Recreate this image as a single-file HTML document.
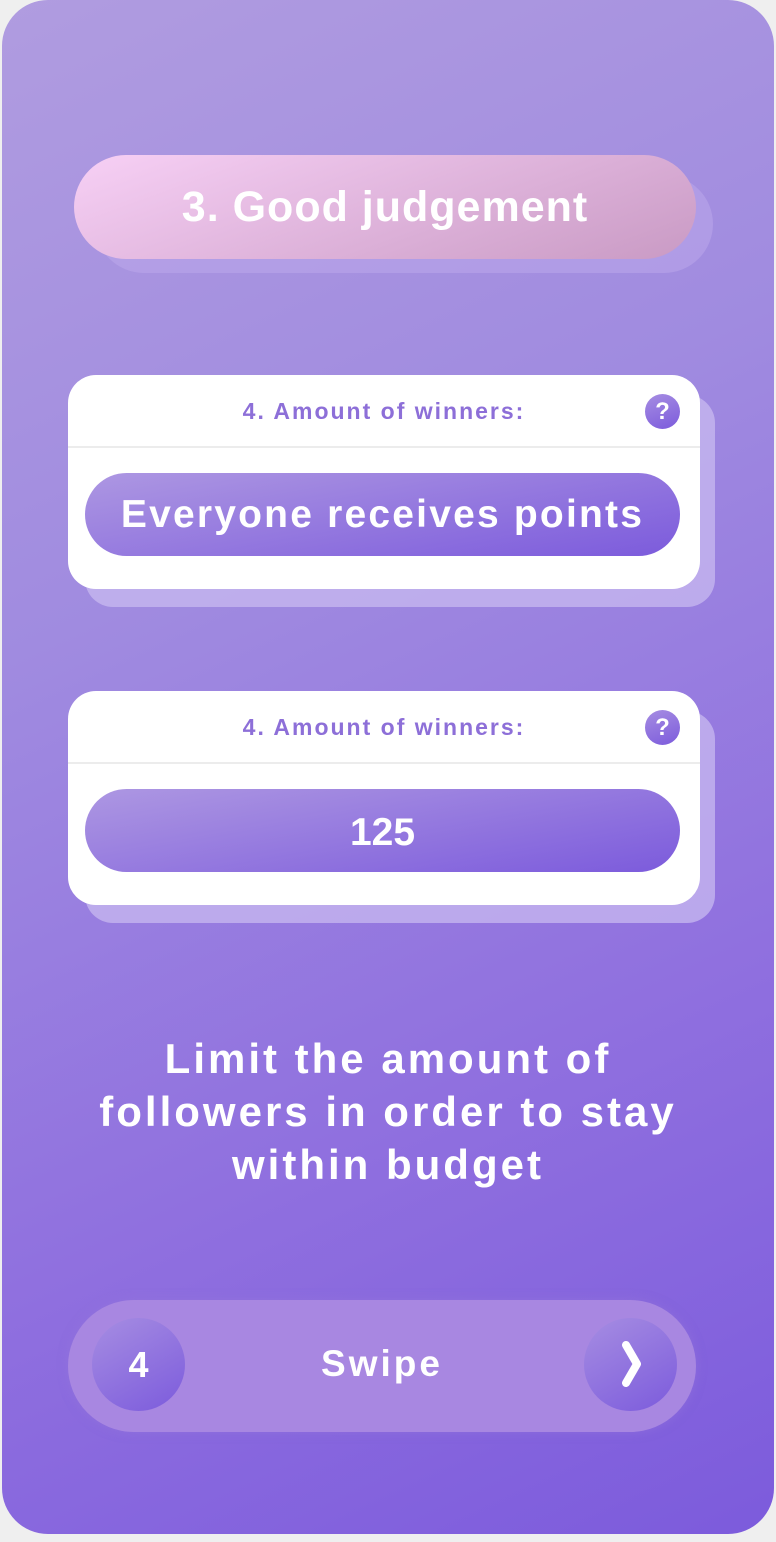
<!DOCTYPE html><html><head><style>
body{margin:0;width:776px;height:1542px;background:#efefef;font-family:"Liberation Sans",sans-serif;position:relative;overflow:hidden}
.bg{position:absolute;left:2px;top:0;width:772px;height:1534px;border-radius:46px;background:linear-gradient(155deg,#b09ce0 0%,#a08be0 35%,#8f6fdf 70%,#7c5bdc 100%)}
.abs{position:absolute}
.tsh{left:95px;top:175px;width:618px;height:98px;border-radius:50px;background:rgba(190,170,235,.5)}
.title{left:74px;top:155px;width:622px;height:104px;border-radius:52px;background:linear-gradient(160deg,#f7d0f5,#c99ac4);color:#fff;font-size:43px;font-weight:bold;text-align:center;line-height:104px;letter-spacing:1px}
.csh{width:630px;height:212px;border-radius:28px;background:rgba(200,185,240,.75)}
.card{width:632px;height:214px;border-radius:28px;background:#fff}
.hd{position:absolute;left:0;top:0;width:100%;height:71px;border-bottom:2px solid #ececec;text-align:center;line-height:72px;color:#8d6fd8;font-weight:bold;font-size:23px;letter-spacing:2px}
.q{position:absolute;left:577px;top:19px;width:35px;height:35px;border-radius:50%;background:linear-gradient(160deg,#a68de2,#7c5bdc);color:#fff;font-size:24px;line-height:35px;text-align:center;font-weight:bold}
.btn{position:absolute;left:17px;top:98px;width:595px;height:83px;border-radius:42px;background:linear-gradient(170deg,#ad97e2,#7c5bdc);color:#fff;font-weight:bold;font-size:39px;text-align:center;line-height:83px}
.txt{left:0;width:776px;top:1032px;text-align:center;color:#fff;font-weight:bold;font-size:42px;line-height:53px;letter-spacing:3px}
.sw{left:68px;top:1300px;width:628px;height:132px;border-radius:66px;background:#a887e1;box-shadow:0 0 10px rgba(150,120,220,.5)}
.c{width:93px;height:93px;border-radius:50%;background:linear-gradient(150deg,#a68de2,#7c5bdc);color:#fff;font-weight:bold;font-size:36px;text-align:center;line-height:93px;top:1318px}
</style></head><body>
<div class="bg"></div>
<div class="abs tsh"></div>
<div class="abs title">3. Good judgement</div>
<div class="abs csh" style="left:85px;top:395px"></div>
<div class="abs card" style="left:68px;top:375px"><div class="hd">4. Amount of winners:</div><div class="q">?</div><div class="btn" style="letter-spacing:2.2px">Everyone receives points</div></div>
<div class="abs csh" style="left:85px;top:711px"></div>
<div class="abs card" style="left:68px;top:691px"><div class="hd">4. Amount of winners:</div><div class="q">?</div><div class="btn" style="line-height:88px">125</div></div>
<div class="abs txt">Limit the amount of<br>followers in order to stay<br>within budget</div>
<div class="abs sw"></div>
<div class="abs c" style="left:92px">4</div>
<div class="abs c" style="left:584px"><svg width="93" height="93" viewBox="0 0 93 93"><path d="M42 27 L53 46 L42 65" fill="none" stroke="#fff" stroke-width="8" stroke-linecap="round" stroke-linejoin="round"/></svg></div>
<div class="abs" style="left:68px;width:628px;top:1300px;line-height:128px;text-align:center;color:#fff;font-weight:bold;font-size:37px;letter-spacing:3px">Swipe</div>
</body></html>
